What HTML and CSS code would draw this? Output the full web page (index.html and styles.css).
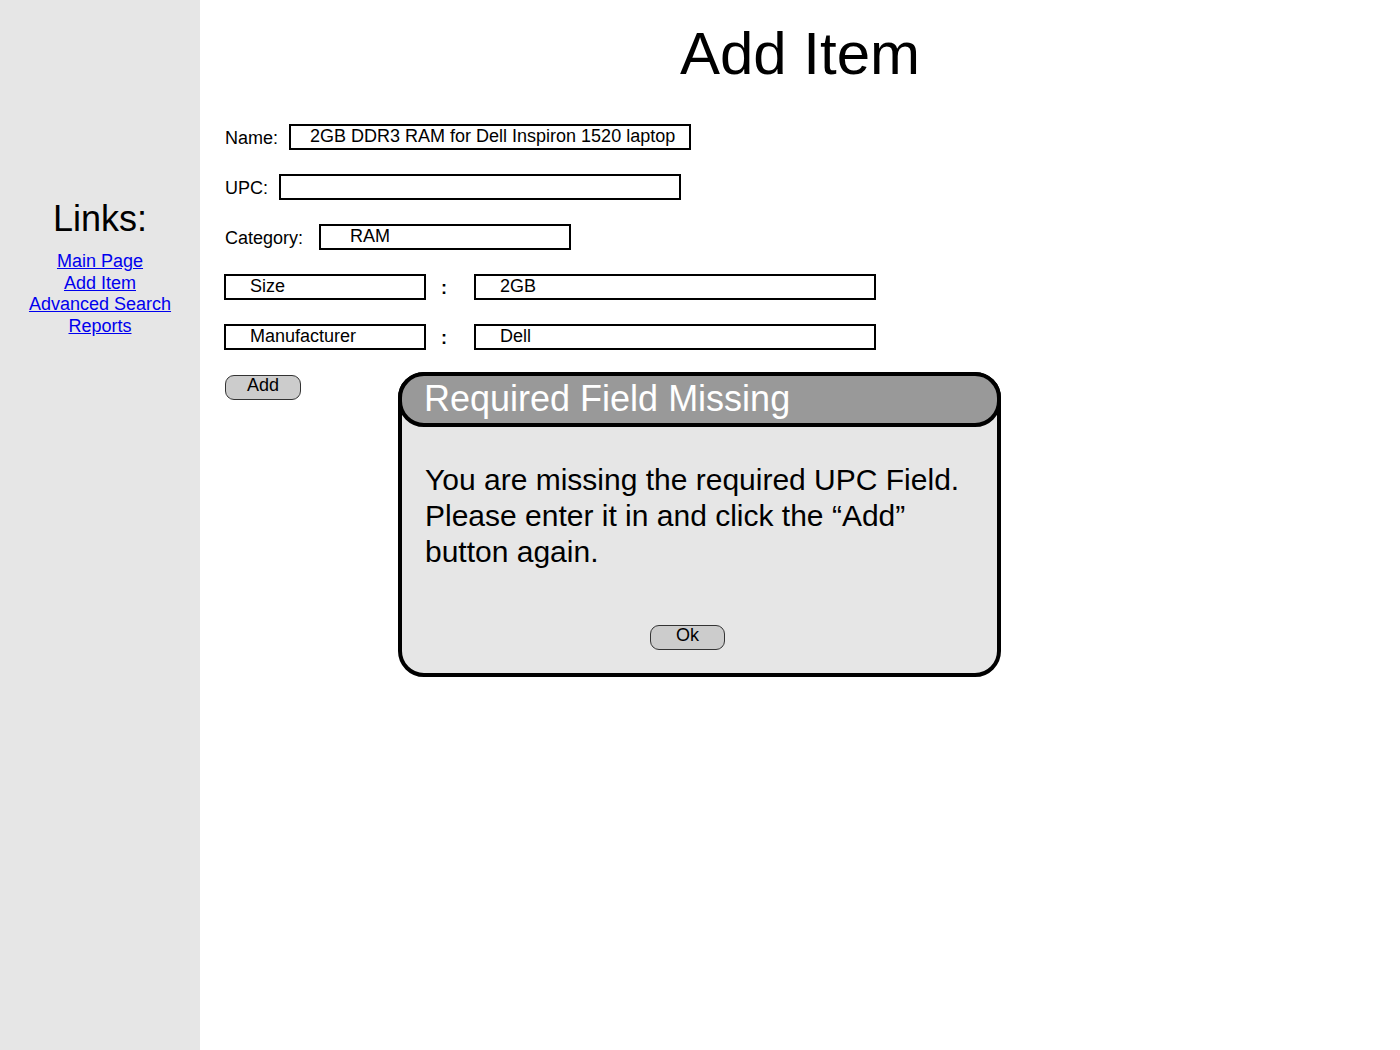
FILE: index.html
```html
<!DOCTYPE html>
<html lang="en">
<head>
<meta charset="utf-8">
<title>Add Item</title>
<link rel="stylesheet" href="styles.css">
</head>
<body>
<aside class="sidebar">
  <h2 class="links-title">Links:</h2>
  <nav class="links">
    <a href="#">Main Page</a>
    <a href="#">Add Item</a>
    <a href="#">Advanced Search</a>
    <a href="#">Reports</a>
  </nav>
</aside>
<main class="main">
  <h1 class="page-title">Add Item</h1>
  <form class="form">
    <div class="row">
      <span class="label label-first">Name:</span>
      <span class="box box-wide box-name">2GB DDR3 RAM for Dell Inspiron 1520 laptop</span>
    </div>
    <div class="row">
      <span class="label label-first">UPC:</span>
      <span class="box box-wide"></span>
    </div>
    <div class="row">
      <span class="label label-first label-cat">Category:</span>
      <span class="box box-cat">RAM</span>
    </div>
    <div class="row">
      <span class="box box-key">Size</span>
      <span class="label colon">:</span>
      <span class="box box-wide box-val">2GB</span>
    </div>
    <div class="row">
      <span class="box box-key">Manufacturer</span>
      <span class="label colon">:</span>
      <span class="box box-wide box-val">Dell</span>
    </div>
    <div class="btn btn-add">Add</div>
  </form>

  <div class="dialog">
    <div class="dialog-header">Required Field Missing</div>
    <div class="dialog-body">
      <p class="dialog-text">You are missing the required UPC Field. Please enter it in and click the “Add” button again.</p>
      <div class="btn btn-ok">Ok</div>
    </div>
  </div>
</main>
</body>
</html>
```

FILE: styles.css
```css
* {
  box-sizing: border-box;
}

html, body {
  margin: 0;
  padding: 0;
}

body {
  display: flex;
  min-height: 100vh;
  font-family: "Liberation Sans", Arial, sans-serif;
  color: #000;
  background: #fff;
}

.sidebar {
  width: 200px;
  flex: none;
  background: #e6e6e6;
  text-align: center;
  padding-top: 199px;
}

.links-title {
  margin: 0;
  font-size: 36px;
  font-weight: normal;
  line-height: 40px;
}

.links {
  display: flex;
  flex-direction: column;
  align-items: center;
  margin-top: 12px;
  font-size: 18px;
  line-height: 21.6px;
}

.links a {
  color: #0000ee;
  text-decoration: underline;
}

.main {
  flex: 1;
  position: relative;
  padding: 0 24px;
}

.page-title {
  margin: 19px 0 0;
  font-size: 60px;
  font-weight: normal;
  line-height: 70px;
  text-align: center;
}

.form {
  margin-top: 35px;
  font-size: 18px;
}

.row {
  display: flex;
  align-items: flex-start;
  height: 26px;
  margin-bottom: 24px;
}

.label {
  line-height: 18px;
  padding-top: 5px;
  margin-right: 11px;
}

.label-first {
  margin-left: 1px;
}

.label-cat {
  margin-right: 16px;
}

.box {
  display: block;
  height: 26px;
  border: 2px solid #000;
  line-height: 18px;
  padding: 1px 0 0 24px;
  white-space: nowrap;
  overflow: hidden;
}

.box-wide {
  width: 402px;
}

.box-name {
  padding-left: 19px;
}

.box-cat {
  width: 252px;
  padding-left: 29px;
}

.box-key {
  width: 202px;
}

.colon {
  font-weight: bold;
  margin: 0 27px 0 15px;
  width: 6px;
}

.btn {
  height: 25px;
  border: 1px solid #333;
  border-radius: 9px;
  background: #cccccc;
  font-size: 18px;
  line-height: 18px;
  text-align: center;
}

.btn-add {
  width: 76px;
  margin-top: 25px;
  margin-left: 1px;
}

.dialog {
  position: absolute;
  left: 198px;
  top: 372px;
  width: 603px;
  border: 4px solid #000;
  border-radius: 26px;
  background: #e6e6e6;
}

.dialog-header {
  margin: -4px -4px 0;
  height: 55px;
  border: 4px solid #000;
  border-radius: 26px;
  background: #999999;
  color: #fff;
  font-size: 36px;
  line-height: 45px;
  padding-left: 22px;
  white-space: nowrap;
}

.dialog-body {
  padding: 35px 30px 23px 23px;
}

.dialog-text {
  margin: 0;
  font-size: 30px;
  line-height: 36px;
}

.btn-ok {
  width: 75px;
  margin-top: 55px;
  margin-left: 225px;
}
```
